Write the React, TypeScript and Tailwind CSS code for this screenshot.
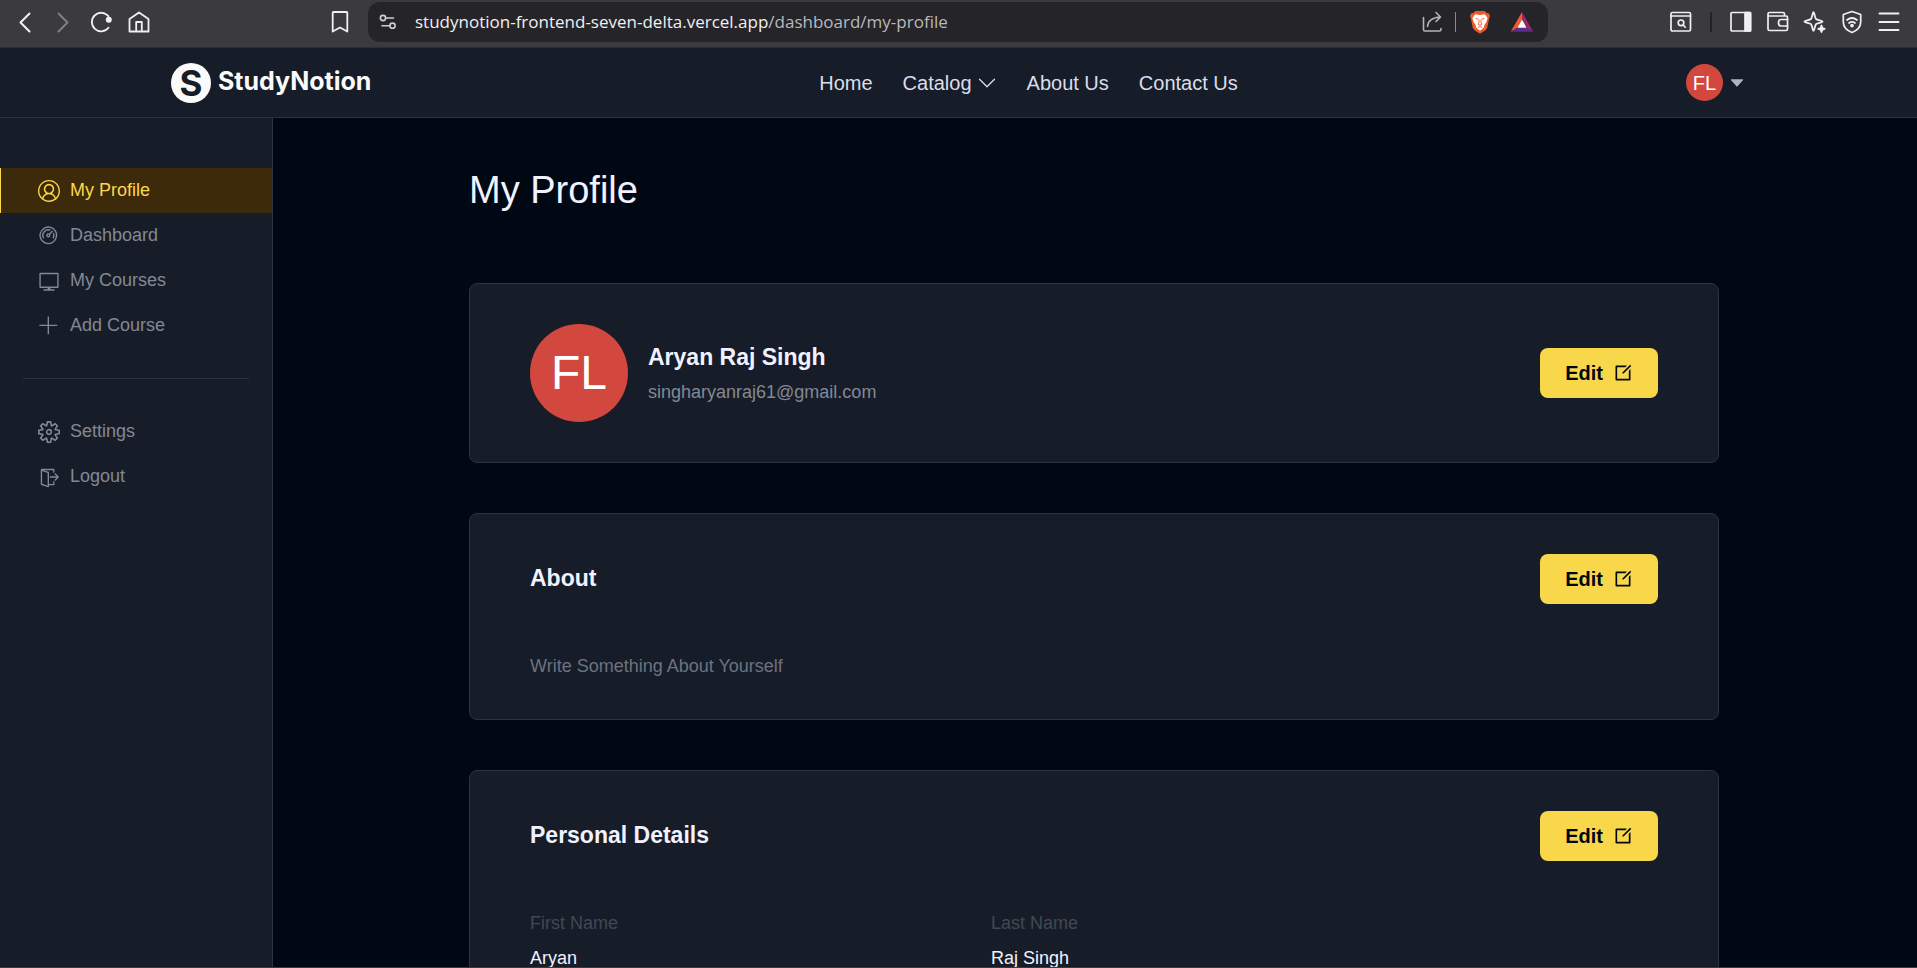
import type { ReactNode } from "react";
import type { IconType } from "react-icons";
import {
  VscAccount,
  VscAdd,
  VscDashboard,
  VscSettingsGear,
  VscSignOut,
  VscVm,
} from "react-icons/vsc";
import { RiEditBoxLine } from "react-icons/ri";
import { BsChevronDown } from "react-icons/bs";
import { AiOutlineCaretDown } from "react-icons/ai";

function Glyph({ children, width = 1.6 }: { children: ReactNode; width?: number }) {
  return (
    <svg
      viewBox="0 0 24 24"
      fill="none"
      stroke="currentColor"
      strokeWidth={width}
      strokeLinecap="round"
      strokeLinejoin="round"
      className="size-6"
      aria-hidden="true"
    >
      {children}
    </svg>
  );
}

function BrowserBar() {
  return (
    <div className="flex h-12 shrink-0 border-b border-[#2e2d32] bg-[#3b3a3f] pb-[3px] text-[#f0f0f2]">
      <div className="flex w-[368px] shrink-0 items-center gap-3.5 pr-4 pl-[13px]">
        <button aria-label="Back">
          <Glyph width={2}><path d="M16.500 3.500 7.500 12.500 16.500 21.500" /></Glyph>
        </button>
        <button aria-label="Forward" className="text-[#828186]">
          <Glyph width={1.8}><path d="M7.500 3.500 16.500 12.500 7.500 21.500" /></Glyph>
        </button>
        <button aria-label="Reload">
          <Glyph width={1.8}>
            <path d="M19.500 6.300A9.300 9.300 0 1 0 19.500 17.800" />
            <circle cx="19.800" cy="9.800" r="2.100" fill="currentColor" />
          </Glyph>
        </button>
        <button aria-label="Home page">
          <Glyph width={1.8}>
            <path d="M2.500 9 12 2.500 21.500 9V21.500H2.500ZM9.200 21.500V12H14.800V21.500" />
          </Glyph>
        </button>
        <button aria-label="Bookmark this page" className="ml-auto">
          <Glyph width={1.8}><path d="M4.700 2.700Q4.700 2 5.400 2H18.600Q19.300 2 19.300 2.700V21.500L12 17.500 4.700 21.500Z" /></Glyph>
        </button>
      </div>

      <div className="mt-0.5 flex h-10 min-w-0 flex-1 items-center rounded-xl bg-[#252429] pr-3.5 pl-2">
        <button aria-label="Site information" className="text-[#cfcfd3]">
          <Glyph>
            <circle cx="7" cy="8" r="2.600" />
            <path d="M9.800 8H17.500" />
            <circle cx="16.500" cy="15.700" r="2.600" />
            <path d="M6 15.700H13.700" />
          </Glyph>
        </button>
        <p className="ml-[15px] truncate font-['Open_Sans','Noto_Sans',sans-serif] text-[17px] text-[#b9b9bd]">
          <span className="text-[#f0f0f2]">studynotion-frontend-seven-delta.vercel.app</span>/dashboard/my-profile
        </p>
        <div className="ml-auto flex items-center">
          <button aria-label="Share" className="text-[#b4b4b8]">
            <Glyph width={1.6}>
              <path d="M2.500 7.500V19.500Q2.500 21 4 21H18.500Q20 21 20 18.500" />
              <path d="M6.500 16.500C7 10.500 10.500 7.500 19.500 7M15 2.500 19.500 7 15 11.500" />
            </Glyph>
          </button>
          <span className="ml-2.5 h-5 w-px bg-[#8a898e]" />
          <button aria-label="Shields" className="ml-3">
            <svg viewBox="0 0 24 24" className="size-6" aria-hidden="true">
              <path d="M7.300 1H16.700L18.700 3 20.800 3.200 22 6 21.200 8 19.300 17.500 17.800 20 12 23.800 6.200 20 4.700 17.500 2.800 8 2 6 3.200 3.200 5.300 3Z" fill="#ee5a29" />
              <path d="M7.200 4.300 12 5 16.800 4.300 19.600 7.900 18.300 12.200 16 15.500 16.300 17.200 12 20.700 7.700 17.200 8 15.500 5.700 12.200 4.400 7.900Z" fill="#fff" />
              <path d="M7.500 8.600 10.300 9 M16.500 8.600 13.700 9M11 9.500V12.800L10 14.200 12 15.400 14 14.200 13 12.800V9.500M9.600 17.600 12 16.400 14.400 17.600" fill="none" stroke="#ee5a29" strokeWidth=".9" />
            </svg>
          </button>
          <button aria-label="Rewards" className="ml-[18px]">
            <svg viewBox="0 0 24 24" className="size-6" aria-hidden="true">
              <path d="M12 2 .7 21.800 7.800 17.500 12 9.500Z" fill="#f15a2b" />
              <path d="M12 2 23.300 21.800 16.200 17.500 12 9.500Z" fill="#9a2563" />
              <path d="M.7 21.800H23.300L16.200 17.500H7.800Z" fill="#5b2d8e" />
              <path d="M12 9.500 16.500 17.700H7.500Z" fill="#fff" />
            </svg>
          </button>
        </div>
      </div>

      <div className="flex w-[369px] shrink-0 items-center justify-end gap-[13px] pr-4">
        <button aria-label="Search tabs">
          <Glyph width={1.7}>
            <rect x="2" y="2.500" width="19.500" height="18.500" rx="1.500" />
            <path d="M2 6H21.500" />
            <circle cx="12" cy="12.800" r="2.800" />
            <path d="M14.200 15 16.200 17.200" />
          </Glyph>
        </button>
        <span className="mx-1 h-5 w-0.5 bg-[#232227]" />
        <button aria-label="Sidebar">
          <Glyph width={1.7}>
            <rect x="2" y="2.500" width="19.500" height="18.500" rx="1" />
            <path d="M16 2.500H21.500V21H16Z" fill="currentColor" />
          </Glyph>
        </button>
        <button aria-label="Wallet">
          <Glyph width={1.7}>
            <path d="M18.500 6V4Q18.500 2.500 17 2.500H3.500Q2 2.500 2 4V19Q2 20.500 3.500 20.500H20Q21.500 20.500 21.500 19V7.500Q21.500 6 20 6H2" />
            <path d="M21.500 9.500H15Q12.500 9.500 12.500 12.700T15 16H21.500" />
          </Glyph>
        </button>
        <button aria-label="Assistant">
          <Glyph width={1.8}>
            <path d="M10.500 2.200C11.500 2.200 11.700 7.500 13 9 14.500 10.500 19.500 10.300 19.500 11.600S14.500 12.700 13 14.200C11.700 15.700 11.500 20.800 10.500 20.800S9.300 15.700 8 14.200C6.500 12.700 1.500 12.900 1.500 11.600S6.500 10.500 8 9C9.300 7.500 9.500 2.200 10.500 2.200Z" />
            <path d="M18.500 15.500 19.300 18 21.700 18.800 19.300 19.600 18.500 22 17.700 19.600 15.300 18.800 17.700 18Z" fill="currentColor" />
          </Glyph>
        </button>
        <button aria-label="VPN">
          <Glyph width={1.7}>
            <path d="M12 1.500 20.700 4.500V12Q20.700 19 12 22.500 3.300 19 3.300 12V4.500Z" />
            <path d="M7 10Q12 6 17 10M9 13Q12 10.600 15 13" />
            <circle cx="12" cy="15.600" r="1" fill="currentColor" />
          </Glyph>
        </button>
        <button aria-label="Menu">
          <Glyph width={1.9}><path d="M2.500 3.500H21.500M2.500 12H21.500M2.500 20H21.500" /></Glyph>
        </button>
      </div>
    </div>
  );
}

function Navbar() {
  return (
    <header className="flex h-[70px] shrink-0 justify-center border-b border-[#2c333f] bg-[#161d29]">
      <div className="flex w-11/12 max-w-[1575px] items-center justify-between">
        <a href="#" className="flex w-[200px] items-center gap-[7px] font-['Inter',sans-serif] text-[#fafafa]">
          <span className="flex size-10 shrink-0 items-center justify-center rounded-full bg-[#fafafa] text-[35px] leading-10 font-bold text-[#161d29]">
            S
          </span>
          <span className="pb-1 text-[25px] leading-8 font-bold">StudyNotion</span>
        </a>
        <nav className="flex items-center gap-[30px] text-xl text-[#dbddea]">
          <a href="#">Home</a>
          <button className="flex items-center gap-[5px]">
            Catalog
            <BsChevronDown aria-hidden="true" />
          </button>
          <a href="#">About Us</a>
          <a href="#">Contact Us</a>
        </nav>
        <button aria-label="Account menu" className="flex items-center gap-[5px]">
          <span className="flex size-[37px] items-center justify-center rounded-full bg-[#d2483e] text-xl text-white">
            FL
          </span>
          <AiOutlineCaretDown className="size-[18px] text-[#afb2bf]" aria-hidden="true" />
        </button>
      </div>
    </header>
  );
}

function SideItem({ icon: Icon, label, active = false }: { icon: IconType; label: string; active?: boolean }) {
  return (
    <a
      href="#"
      className={
        active
          ? "flex h-[45px] items-center gap-2.5 border-l border-[#fad849] bg-[#3d2a0b] pl-[37px] text-lg text-[#fad849]"
          : "flex h-[45px] items-center gap-2.5 pl-[38px] text-lg text-[#838894]"
      }
    >
      <Icon className="size-[22px]" aria-hidden="true" />
      <span className="pb-0.5">{label}</span>
    </a>
  );
}

function Sidebar() {
  return (
    <aside className="w-[273px] shrink-0 border-r border-[#2c333f] bg-[#161d29] py-[50px]">
      <SideItem icon={VscAccount} label="My Profile" active />
      <SideItem icon={VscDashboard} label="Dashboard" />
      <SideItem icon={VscVm} label="My Courses" />
      <SideItem icon={VscAdd} label="Add Course" />
      <hr className="mx-auto my-[30px] w-10/12 border-[#2c333f]" />
      <SideItem icon={VscSettingsGear} label="Settings" />
      <SideItem icon={VscSignOut} label="Logout" />
    </aside>
  );
}

function Card({ children }: { children: ReactNode }) {
  return (
    <section className="flex flex-col gap-[50px] rounded-lg border border-[#2c333f] bg-[#161d29] px-[60px] py-10">
      {children}
    </section>
  );
}

function CardTitle({ children }: { children: ReactNode }) {
  return <h2 className="pb-0.5 text-[23px] leading-[33px] font-bold text-[#f1f2ff]">{children}</h2>;
}

function CardHeader({ children }: { children: ReactNode }) {
  return (
    <div className="flex items-center justify-between">
      {children}
      <button className="flex h-[50px] items-center gap-2.5 rounded-lg bg-[#f9d74b] px-[25px] text-xl font-bold text-[#000814]">
        Edit
        <RiEditBoxLine aria-hidden="true" />
      </button>
    </div>
  );
}

function Detail({ label, value }: { label: string; value: string }) {
  return (
    <div className="flex flex-col gap-2.5 text-lg leading-[25px]">
      <dt className="text-[#424854]">{label}</dt>
      <dd className="text-[#f1f2ff]">{value}</dd>
    </div>
  );
}

export default function App() {
  return (
    <div className="flex h-screen flex-col overflow-hidden border-b border-[#3b3a3f] bg-[#000814] font-['Liberation_Sans',Arial,sans-serif]">
      <BrowserBar />
      <Navbar />
      <div className="flex min-h-0 flex-1">
        <Sidebar />
        <main className="flex-1 overflow-hidden py-[50px] pr-0.5">
          <div className="mx-auto w-11/12 max-w-[1250px]">
            <h1 className="mb-[70px] text-[38px] leading-[45px] text-[#f1f2ff]">My Profile</h1>
            <div className="flex flex-col gap-[50px]">
              <Card>
                <CardHeader>
                  <div className="flex items-center gap-5">
                    <span className="flex size-[98px] items-center justify-center rounded-full bg-[#d2483e] text-5xl text-white">
                      FL
                    </span>
                    <div className="flex flex-col gap-1">
                      <CardTitle>Aryan Raj Singh</CardTitle>
                      <p className="text-lg leading-[25px] text-[#838894]">singharyanraj61@gmail.com</p>
                    </div>
                  </div>
                </CardHeader>
              </Card>
              <Card>
                <CardHeader>
                  <CardTitle>About</CardTitle>
                </CardHeader>
                <p className="text-lg leading-[25px] text-[#6e727f]">Write Something About Yourself</p>
              </Card>
              <Card>
                <CardHeader>
                  <CardTitle>Personal Details</CardTitle>
                </CardHeader>
                <dl className="grid max-w-[922px] grid-cols-2">
                  <Detail label="First Name" value="Aryan" />
                  <Detail label="Last Name" value="Raj Singh" />
                </dl>
              </Card>
            </div>
          </div>
        </main>
      </div>
    </div>
  );
}
